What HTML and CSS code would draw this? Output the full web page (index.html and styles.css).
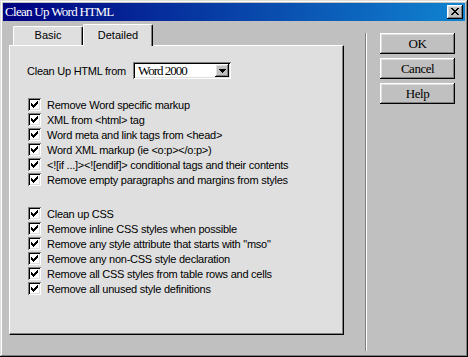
FILE: index.html
```html
<!DOCTYPE html>
<html>
<head>
<meta charset="utf-8">
<title>Clean Up Word HTML</title>
<link rel="stylesheet" href="styles.css">
</head>
<body>
<div class="window">
  <div class="titlebar">
    <span class="title">Clean Up Word HTML</span>
    <div class="close"><svg width="8" height="7" viewBox="0 0 8 7" shape-rendering="crispEdges"><path fill="#000" d="M0 0h2v1H0zM6 0h2v1H6zM1 1h2v1H1zM5 1h2v1H5zM2 2h4v1H2zM3 3h2v1H3zM2 4h4v1H2zM1 5h2v1H1zM5 5h2v1H5zM0 6h2v1H0zM6 6h2v1H6z"/></svg></div>
  </div>
  <div class="main">
    <div class="leftcol">
      <div class="tabs">
        <div class="tab">Basic</div>
        <div class="tab active">Detailed</div>
      </div>
      <div class="panel">
        <div class="fromrow">
          <span class="label">Clean Up HTML from</span>
          <div class="combo">
            <span class="combo-text">Word 2000</span>
            <span class="combo-btn"><svg width="7" height="4" viewBox="0 0 7 4" shape-rendering="crispEdges"><path fill="#000" d="M0 0h7v1H0zM1 1h5v1H1zM2 2h3v1H2zM3 3h1v1H3z"/></svg></span>
          </div>
        </div>
        <ul class="checks">
          <li><span class="cb"><svg width="7" height="7" viewBox="0 0 7 7" shape-rendering="crispEdges"><path fill="#000" d="M6 0h1v1H6zM5 1h2v1H5zM0 2h1v1H0zM4 2h3v1H4zM0 3h2v1H0zM3 3h3v1H3zM0 4h5v1H0zM1 5h3v1H1zM2 6h1v1H2z"/></svg></span>Remove Word specific markup</li>
          <li><span class="cb"><svg width="7" height="7" viewBox="0 0 7 7" shape-rendering="crispEdges"><path fill="#000" d="M6 0h1v1H6zM5 1h2v1H5zM0 2h1v1H0zM4 2h3v1H4zM0 3h2v1H0zM3 3h3v1H3zM0 4h5v1H0zM1 5h3v1H1zM2 6h1v1H2z"/></svg></span>XML from &lt;html&gt; tag</li>
          <li><span class="cb"><svg width="7" height="7" viewBox="0 0 7 7" shape-rendering="crispEdges"><path fill="#000" d="M6 0h1v1H6zM5 1h2v1H5zM0 2h1v1H0zM4 2h3v1H4zM0 3h2v1H0zM3 3h3v1H3zM0 4h5v1H0zM1 5h3v1H1zM2 6h1v1H2z"/></svg></span>Word meta and link tags from &lt;head&gt;</li>
          <li><span class="cb"><svg width="7" height="7" viewBox="0 0 7 7" shape-rendering="crispEdges"><path fill="#000" d="M6 0h1v1H6zM5 1h2v1H5zM0 2h1v1H0zM4 2h3v1H4zM0 3h2v1H0zM3 3h3v1H3zM0 4h5v1H0zM1 5h3v1H1zM2 6h1v1H2z"/></svg></span>Word XML markup (ie &lt;o:p&gt;&lt;/o:p&gt;)</li>
          <li><span class="cb"><svg width="7" height="7" viewBox="0 0 7 7" shape-rendering="crispEdges"><path fill="#000" d="M6 0h1v1H6zM5 1h2v1H5zM0 2h1v1H0zM4 2h3v1H4zM0 3h2v1H0zM3 3h3v1H3zM0 4h5v1H0zM1 5h3v1H1zM2 6h1v1H2z"/></svg></span>&lt;![if ...]&gt;&lt;![endif]&gt; conditional tags and their contents</li>
          <li><span class="cb"><svg width="7" height="7" viewBox="0 0 7 7" shape-rendering="crispEdges"><path fill="#000" d="M6 0h1v1H6zM5 1h2v1H5zM0 2h1v1H0zM4 2h3v1H4zM0 3h2v1H0zM3 3h3v1H3zM0 4h5v1H0zM1 5h3v1H1zM2 6h1v1H2z"/></svg></span>Remove empty paragraphs and margins from styles</li>
        </ul>
        <ul class="checks second">
          <li><span class="cb"><svg width="7" height="7" viewBox="0 0 7 7" shape-rendering="crispEdges"><path fill="#000" d="M6 0h1v1H6zM5 1h2v1H5zM0 2h1v1H0zM4 2h3v1H4zM0 3h2v1H0zM3 3h3v1H3zM0 4h5v1H0zM1 5h3v1H1zM2 6h1v1H2z"/></svg></span>Clean up CSS</li>
          <li><span class="cb"><svg width="7" height="7" viewBox="0 0 7 7" shape-rendering="crispEdges"><path fill="#000" d="M6 0h1v1H6zM5 1h2v1H5zM0 2h1v1H0zM4 2h3v1H4zM0 3h2v1H0zM3 3h3v1H3zM0 4h5v1H0zM1 5h3v1H1zM2 6h1v1H2z"/></svg></span>Remove inline CSS styles when possible</li>
          <li><span class="cb"><svg width="7" height="7" viewBox="0 0 7 7" shape-rendering="crispEdges"><path fill="#000" d="M6 0h1v1H6zM5 1h2v1H5zM0 2h1v1H0zM4 2h3v1H4zM0 3h2v1H0zM3 3h3v1H3zM0 4h5v1H0zM1 5h3v1H1zM2 6h1v1H2z"/></svg></span>Remove any style attribute that starts with "mso"</li>
          <li><span class="cb"><svg width="7" height="7" viewBox="0 0 7 7" shape-rendering="crispEdges"><path fill="#000" d="M6 0h1v1H6zM5 1h2v1H5zM0 2h1v1H0zM4 2h3v1H4zM0 3h2v1H0zM3 3h3v1H3zM0 4h5v1H0zM1 5h3v1H1zM2 6h1v1H2z"/></svg></span>Remove any non-CSS style declaration</li>
          <li><span class="cb"><svg width="7" height="7" viewBox="0 0 7 7" shape-rendering="crispEdges"><path fill="#000" d="M6 0h1v1H6zM5 1h2v1H5zM0 2h1v1H0zM4 2h3v1H4zM0 3h2v1H0zM3 3h3v1H3zM0 4h5v1H0zM1 5h3v1H1zM2 6h1v1H2z"/></svg></span>Remove all CSS styles from table rows and cells</li>
          <li><span class="cb"><svg width="7" height="7" viewBox="0 0 7 7" shape-rendering="crispEdges"><path fill="#000" d="M6 0h1v1H6zM5 1h2v1H5zM0 2h1v1H0zM4 2h3v1H4zM0 3h2v1H0zM3 3h3v1H3zM0 4h5v1H0zM1 5h3v1H1zM2 6h1v1H2z"/></svg></span>Remove all unused style definitions</li>
        </ul>
      </div>
    </div>
    <div class="sep"></div>
    <div class="buttons">
      <div class="btn">OK</div>
      <div class="btn">Cancel</div>
      <div class="btn">Help</div>
    </div>
  </div>
</div>
</body>
</html>
```
FILE: styles.css
```css
html, body {
  margin: 0;
  padding: 0;
  background: #c0c0c0;
}
body {
  font-family: "Liberation Sans", Arial, sans-serif;
  font-size: 11px;
  letter-spacing: -0.25px;
  color: #000;
}
svg { display: block; }

.window {
  width: 468px;
  height: 357px;
  box-sizing: border-box;
  padding: 3px;
  background: #c0c0c0;
  box-shadow: inset -1px -1px #000, inset 1px 1px #dfdfdf, inset -2px -2px #808080, inset 2px 2px #fff;
  display: flex;
  flex-direction: column;
}

.titlebar {
  flex: none;
  height: 18px;
  display: flex;
  align-items: center;
  justify-content: space-between;
  padding: 0 2px;
  background: linear-gradient(90deg, #000080, #1084d0);
}
.title {
  font-family: "Liberation Serif", "Times New Roman", serif;
  font-size: 13px;
  letter-spacing: -0.7px;
  line-height: 18px;
  color: #fff;
}
.close {
  width: 16px;
  height: 14px;
  box-sizing: border-box;
  padding: 3px 0 0 4px;
  background: #c0c0c0;
  box-shadow: inset -1px -1px #000, inset 1px 1px #fff, inset -2px -2px #808080, inset 2px 2px #dfdfdf;
}

.main {
  flex: 1;
  display: flex;
}
.leftcol {
  flex: none;
  width: 335px;
  margin: 3px 0 0 6px;
}
.tabs {
  display: flex;
  height: 21px;
  padding-left: 4px;
}
.tab {
  width: 70px;
  height: 19px;
  margin-top: 2px;
  box-sizing: border-box;
  background: #dfdfdf;
  border-top: 1px solid #fff;
  border-left: 1px solid #fff;
  border-right: 1px solid #000;
  box-shadow: inset -1px 0 #808080;
  border-radius: 2px 2px 0 0;
  text-align: center;
  line-height: 13px;
  padding-top: 2px;
  letter-spacing: 0;
}
.tab.active {
  height: 22px;
  margin-top: 0;
  padding-top: 4px;
  position: relative;
  z-index: 1;
}

.panel {
  height: 290px;
  box-sizing: border-box;
  background: #dfdfdf;
  border-top: 1px solid #fff;
  border-left: 1px solid #fff;
  border-right: 1px solid #000;
  border-bottom: 1px solid #000;
  box-shadow: inset -1px -1px #808080;
  padding: 16px 0 0 17px;
}
.fromrow {
  display: flex;
  align-items: center;
  height: 17px;
}
.label {
  width: 106px;
  flex: none;
}
.combo {
  width: 98px;
  height: 17px;
  box-sizing: border-box;
  padding: 2px;
  display: flex;
  background: #fff;
  box-shadow: inset 1px 1px #808080, inset -1px -1px #fff, inset 2px 2px #000, inset -2px -2px #dfdfdf;
}
.combo-text {
  flex: 1;
  padding-left: 3px;
  font-family: "Liberation Serif", "Times New Roman", serif;
  font-size: 13px;
  letter-spacing: -1px;
  line-height: 13px;
}
.combo-btn {
  width: 14px;
  height: 13px;
  box-sizing: border-box;
  display: flex;
  align-items: center;
  justify-content: center;
  background: #c0c0c0;
  box-shadow: inset -1px -1px #000, inset 1px 1px #fff, inset -2px -2px #808080, inset 2px 2px #dfdfdf;
}

.checks {
  list-style: none;
  margin: 18px 0 0 1px;
  padding: 0;
}
.checks.second {
  margin-top: 19px;
}
.checks li {
  display: flex;
  align-items: center;
  height: 15px;
  white-space: nowrap;
}
.cb {
  flex: none;
  width: 13px;
  height: 13px;
  box-sizing: border-box;
  padding: 3px;
  margin-right: 6px;
  background: #fff;
  box-shadow: inset 1px 1px #808080, inset -1px -1px #fff, inset 2px 2px #000, inset -2px -2px #dfdfdf;
}

.sep {
  flex: none;
  width: 2px;
  margin: 12px 0 3px 21px;
  box-shadow: inset 1px 0 #808080, inset -1px 0 #fff;
}
.buttons {
  margin: 12px 0 0 13px;
  display: flex;
  flex-direction: column;
  gap: 4px;
}
.btn {
  width: 75px;
  height: 21px;
  box-sizing: border-box;
  display: flex;
  align-items: center;
  justify-content: center;
  background: #c0c0c0;
  box-shadow: inset -1px -1px #000, inset 1px 1px #fff, inset -2px -2px #808080, inset 2px 2px #dfdfdf;
  font-family: "Liberation Serif", "Times New Roman", serif;
  font-size: 13px;
  letter-spacing: -0.5px;
}
```
